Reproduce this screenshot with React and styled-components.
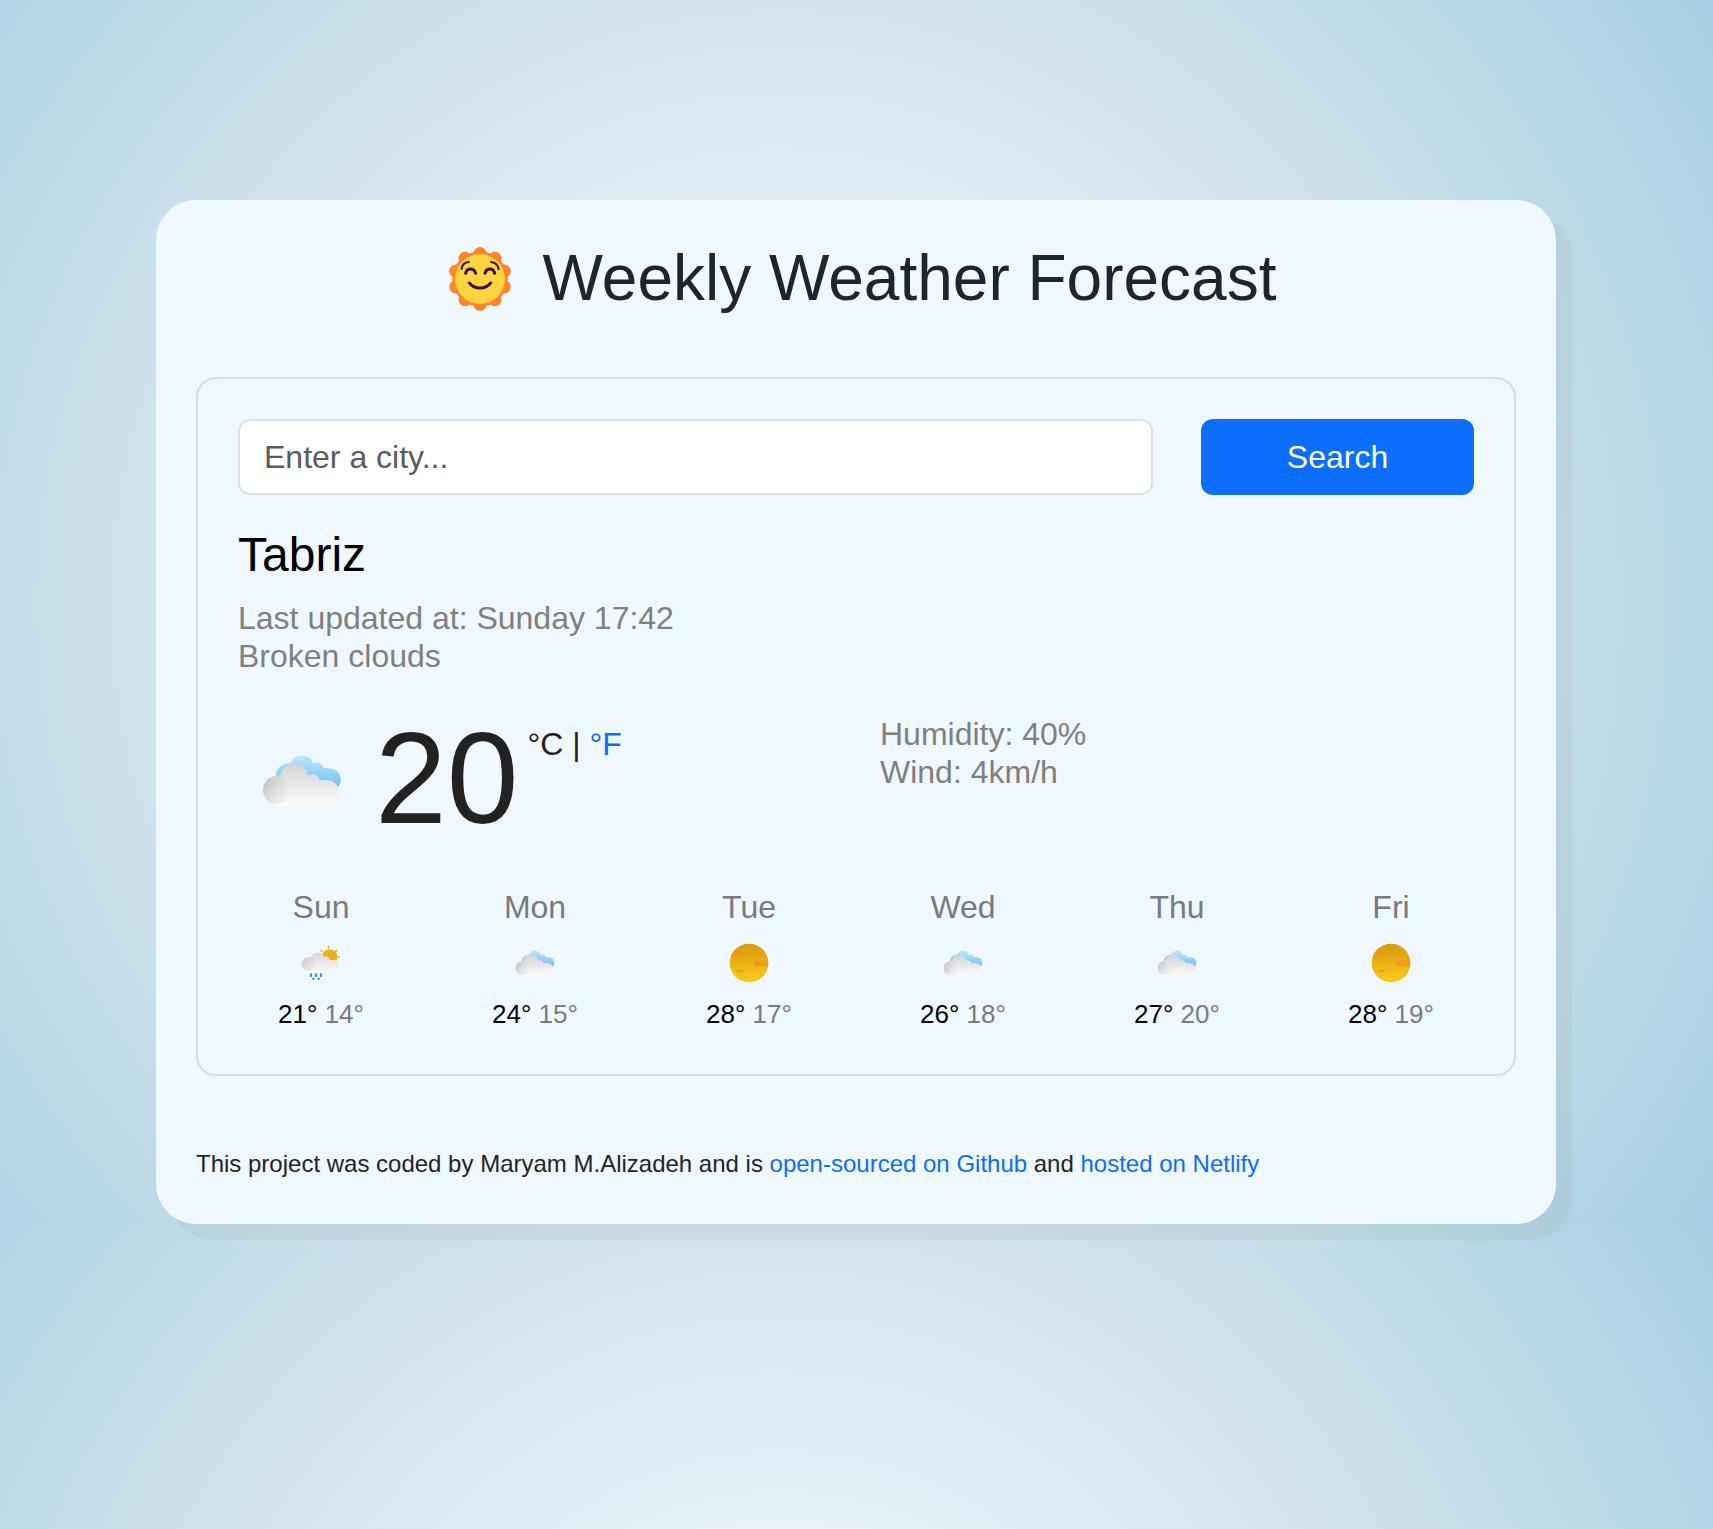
import React from "react";
import styled, { createGlobalStyle } from "styled-components";

const GlobalStyle = createGlobalStyle`
  *, *::before, *::after { box-sizing: border-box; }
  body {
    margin: 0;
    min-height: 1529px;
    font-family: "Liberation Sans", Arial, sans-serif;
    font-size: 32px;
    line-height: 1.5;
    color: #212529;
    background: radial-gradient(circle farthest-corner at 45.6% 49.4%, rgb(255, 255, 255) 0%, rgb(200, 223, 236) 65%, rgb(167, 207, 227) 100%);
    background-size: 100% 1224px;
  }
  #root { display: flow-root; min-height: 1529px; }
`;

const Card = styled.main`
  width: 1400px;
  height: 1024px;
  margin: 200px auto 0;
  position: relative;
  left: -0.5px;
  padding: 40px;
  border-radius: 40px;
  background: aliceblue;
  box-shadow: 16px 16px 2px rgba(150, 165, 165, 0.16);
`;

const Title = styled.h1`
  display: flex;
  align-items: center;
  justify-content: center;
  gap: 31px;
  height: 77px;
  margin: 0 0 60px;
  padding-left: 12px;
  font-size: 64px;
  font-weight: 400;
  line-height: 1.2;
`;

const Panel = styled.section`
  height: 699px;
  padding: 40px;
  border: 2px solid #dadce2;
  border-radius: 20px;
`;

const SearchForm = styled.form`
  display: grid;
  grid-template-columns: 915px 273px;
  gap: 48px;
  height: 76px;
`;

const CityInput = styled.input`
  width: 100%;
  padding: 12px 24px;
  border: 2px solid #dee2e6;
  border-radius: 12px;
  background: #fff;
  font: inherit;
  color: #212529;
  &::placeholder { color: #595c5f; opacity: 1; }
`;

const SearchButton = styled.button`
  padding: 12px 24px;
  border: 0;
  border-radius: 12px;
  background: #0d6efd;
  color: #fff;
  font: inherit;
`;

const City = styled.h2`
  margin: 31px 0 15px;
  font-size: 48px;
  font-weight: 400;
  line-height: 58px;
  color: #000;
`;

const Details = styled.ul`
  margin: 0;
  padding: 0;
  list-style: none;
  line-height: 38.4px;
  color: #808080;
`;

const Current = styled.div`
  display: grid;
  grid-template-columns: 1fr 1fr;
  column-gap: 48px;
  height: 152px;
  margin-top: 39px;
`;

const Reading = styled.div`
  display: flex;
  align-items: flex-start;
  padding: 0 0 0 24px;
  color: #222;
`;

const CurrentIcon = styled.div`
  display: flex;
  width: 80px;
  padding-top: 25px;
  margin-right: 33px;
`;

const Degrees = styled.strong`
  font-size: 129px;
  font-weight: 400;
  line-height: 126px;
`;

const Units = styled.span`
  margin: 10px 0 0 9px;
  line-height: 38px;
`;

const Link = styled.a`
  color: #0d6efd;
  text-decoration: none;
`;

const Week = styled.div`
  display: grid;
  grid-template-columns: repeat(6, 1fr);
  gap: 48px;
  margin-top: 16px;
`;

const Day = styled.div`
  display: flex;
  flex-direction: column;
  align-items: center;
  color: #777b80;
`;

const DayName = styled.div`
  height: 48px;
  margin-bottom: 12px;
`;

const Temperatures = styled.div`
  margin-top: 12px;
  font-size: 26px;
  line-height: 38px;
  white-space: nowrap;
`;

const High = styled.span`
  color: #000;
`;

const Footer = styled.footer`
  margin-top: 70px;
  font-size: 24px;
  line-height: 36px;
`;

const petals = Array.from({ length: 10 }, (_, i) => {
  const a = (i / 10) * Math.PI * 2;
  return { cx: 150 + 76 * Math.sin(a), cy: 144 - 76 * Math.cos(a) };
});

function SmilingSun() {
  return (
    <svg width="64" height="64" viewBox="54 48 192 192">
      <g fill="#ff852e">
        <circle cx="150" cy="144" r="83" />
        {petals.map(({ cx, cy }, i) => (
          <circle key={i} cx={cx} cy={cy} r="20" />
        ))}
      </g>
      <circle cx="150" cy="144" r="75" fill="#fbcb35" />
      <circle cx="150" cy="144" r="72" fill="#fed53f" />
      <g fill="none" stroke="#35163d" strokeLinecap="round">
        <g strokeWidth="6">
          <path d="M95 114Q97 94 117 93" />
          <path d="M183 93Q203 95 206 115" />
        </g>
        <g strokeWidth="9">
          <path d="M107 127C111 110 131 110 137 127" />
          <path d="M165 127C170 110 190 110 194 127" />
          <path d="M118 156C134 176 166 176 182 156" />
        </g>
      </g>
    </svg>
  );
}

function CloudsIcon({ id, size }) {
  return (
    <svg width={size} height={size} viewBox="97 90 240 240">
      <defs>
        <linearGradient id={`${id}-sky`} gradientUnits="userSpaceOnUse" x1="0" y1="134" x2="0" y2="235">
          <stop offset="0" stopColor="#c2e6fd" />
          <stop offset="1" stopColor="#6fc1f4" />
        </linearGradient>
        <linearGradient id={`${id}-body`} gradientUnits="userSpaceOnUse" x1="0" y1="165" x2="0" y2="285">
          <stop offset="0" stopColor="#d5d5d5" />
          <stop offset="1" stopColor="#fbfbfb" />
        </linearGradient>
        <linearGradient id={`${id}-puff`} x1="0.1" y1="0.2" x2="1" y2="0.65">
          <stop offset="0" stopColor="#c8c8c8" />
          <stop offset="1" stopColor="#ececec" stopOpacity="0.4" />
        </linearGradient>
      </defs>
      <path d="M140 207A38 38 0 0 1 183 160A36 36 0 0 1 250 159Q272 151 283 175L299 175A34 34 0 0 1 325 231L150 231Z" fill={`url(#${id}-sky)`} />
      <path d="M142 285A44 44 0 1 1 152 197A43 43 0 0 1 236 196Q261 186 270 211L292 211A37 37 0 0 1 292 285Z" fill={`url(#${id}-body)`} />
      <circle cx="142" cy="240" r="42" fill={`url(#${id}-puff)`} />
    </svg>
  );
}

function RainIcon({ id, size }) {
  return (
    <svg width={size} height={size} viewBox="93 39 120 120">
      <defs>
        <linearGradient id={`${id}-body`} x1="0" y1="0" x2="0" y2="1">
          <stop offset="0" stopColor="#d6d6d6" />
          <stop offset="1" stopColor="#f8f8f8" />
        </linearGradient>
        <linearGradient id={`${id}-puff`} x1="0" y1="0.2" x2="1" y2="0.65">
          <stop offset="0" stopColor="#c8c8c8" />
          <stop offset="1" stopColor="#e8e8e8" stopOpacity="0.5" />
        </linearGradient>
      </defs>
      <g stroke="#f5b51f" strokeWidth="5" strokeLinecap="round">
        <path d="M176 50v4M200 61l-3 3M208 81h-4M153 61l3 3" />
      </g>
      <circle cx="179" cy="81" r="23" fill="#edb021" />
      <path d="M117 125A22 22 0 1 1 122 82A22 22 0 0 1 162 80Q175 77 179 90L190 90A17.5 17.5 0 0 1 190 125Z" fill={`url(#${id}-body)`} />
      <circle cx="117" cy="103" r="21" fill={`url(#${id}-puff)`} />
      <g stroke="#3997cb" strokeWidth="7" strokeLinecap="round">
        <path d="M123 133v5M138 133v5M153 133v5M130 146v1M146 146v1" />
      </g>
    </svg>
  );
}

function ClearIcon({ id, size }) {
  return (
    <svg width={size} height={size} viewBox="87 38 120 120">
      <defs>
        <linearGradient id={`${id}-disc`} x1="0" y1="0" x2="0" y2="1">
          <stop offset="0" stopColor="#d9990d" />
          <stop offset="1" stopColor="#fccb1c" />
        </linearGradient>
        <clipPath id={`${id}-clip`}>
          <circle cx="147" cy="98" r="58" />
        </clipPath>
      </defs>
      <circle cx="147" cy="98" r="58" fill={`url(#${id}-disc)`} />
      <g clipPath={`url(#${id}-clip)`} fill="#e8991a" fillOpacity="0.7">
        <rect x="80" y="60" width="59" height="19" rx="9.5" />
        <rect x="161" y="89" width="60" height="19" rx="9.5" />
        <rect x="108" y="118" width="21" height="8" rx="4" />
      </g>
    </svg>
  );
}

const forecast = [
  { name: "Sun", Icon: RainIcon, high: 21, low: 14 },
  { name: "Mon", Icon: CloudsIcon, high: 24, low: 15 },
  { name: "Tue", Icon: ClearIcon, high: 28, low: 17 },
  { name: "Wed", Icon: CloudsIcon, high: 26, low: 18 },
  { name: "Thu", Icon: CloudsIcon, high: 27, low: 20 },
  { name: "Fri", Icon: ClearIcon, high: 28, low: 19 },
];

export default function App() {
  return (
    <>
      <GlobalStyle />
      <Card>
        <Title>
          <SmilingSun />
          <span>Weekly Weather Forecast</span>
        </Title>
        <Panel>
          <SearchForm onSubmit={(e) => e.preventDefault()}>
            <CityInput type="text" placeholder="Enter a city..." />
            <SearchButton type="submit">Search</SearchButton>
          </SearchForm>
          <City>Tabriz</City>
          <Details>
            <li>Last updated at: Sunday 17:42</li>
            <li>Broken clouds</li>
          </Details>
          <Current>
            <Reading>
              <CurrentIcon>
                <CloudsIcon id="current" size={80} />
              </CurrentIcon>
              <Degrees>20</Degrees>
              <Units>
                °C | <Link href="#">°F</Link>
              </Units>
            </Reading>
            <Details>
              <li>Humidity: 40%</li>
              <li>Wind: 4km/h</li>
            </Details>
          </Current>
          <Week>
            {forecast.map(({ name, Icon, high, low }) => (
              <Day key={name}>
                <DayName>{name}</DayName>
                <Icon id={name} size={40} />
                <Temperatures>
                  <High>{high}°</High> {low}°
                </Temperatures>
              </Day>
            ))}
          </Week>
        </Panel>
        <Footer>
          This project was coded by Maryam M.Alizadeh and is{" "}
          <Link href="#">open-sourced on Github</Link> and <Link href="#">hosted on Netlify</Link>
        </Footer>
      </Card>
    </>
  );
}
